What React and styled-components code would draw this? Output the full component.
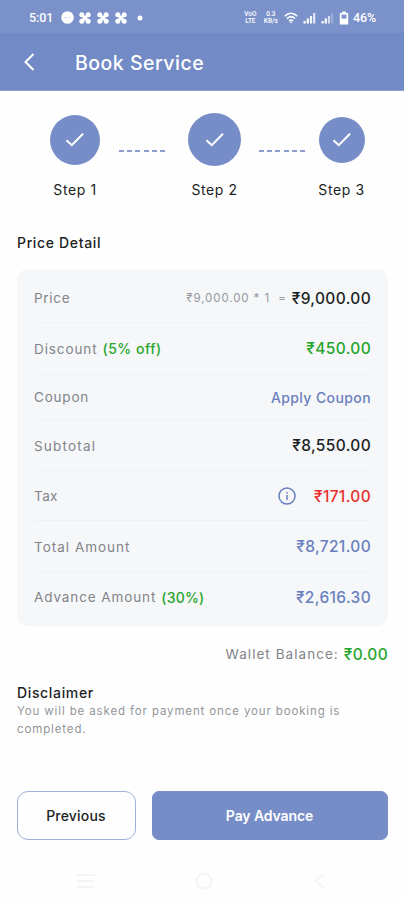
import React from 'react'
import styled, { createGlobalStyle } from 'styled-components'

const GlobalStyle=createGlobalStyle`
*{
  box-sizing:border-box;
}
body{
  margin:0;
  background-color:#fefefe;
}
`
const Container=styled.div`
width:404px;
height:900px;
display:flex;
flex-direction:column;
overflow:hidden;
background-color:#fefefe;
color:#1c1f24;
font-family:Inter,"Noto Sans",sans-serif;
`
const StatusBar=styled.div`
height:33px;
padding:2px 28px 0 29px;
display:flex;
align-items:center;
justify-content:space-between;
background-color:#7a91ca;
color:white;
font-family:Roboto,sans-serif;
font-weight:500;
`
const StatusGroup=styled.div`
display:flex;
align-items:center;
gap:${({$gap})=>$gap}px;
`
const Time=styled.span`
font-size:12.5px;
letter-spacing:-0.1px;
margin-right:4px;
`
const Percent=styled.span`
font-size:12.5px;
letter-spacing:-0.1px;
margin-left:-1px;
`
const Tiny=styled.span`
display:flex;
flex-direction:column;
align-items:center;
width:${({$width})=>$width}px;
font-size:6.5px;
line-height:7px;
`
const TopBar=styled.div`
height:58px;
padding:0 22px;
display:flex;
align-items:center;
gap:39px;
background-color:#728ac5;
border-bottom:1px solid #8d9fce;
color:white;
`
const Title=styled.h1`
margin:2px 0 0;
font-size:19.5px;
font-weight:500;
letter-spacing:0.5px;
`
const Steps=styled.div`
height:143px;
padding-left:49px;
display:flex;
`
const Step=styled.div`
width:${({$width})=>$width}px;
display:flex;
flex-direction:column;
align-items:center;
`
const Badge=styled.div`
height:53px;
margin-top:22px;
display:flex;
align-items:center;
`
const Circle=styled.div`
width:${({$size})=>$size}px;
height:${({$size})=>$size}px;
border-radius:50%;
background-color:#768dc7;
display:flex;
align-items:center;
justify-content:center;
`
const StepLabel=styled.span`
margin-top:15px;
font-size:14px;
line-height:18px;
letter-spacing:0.6px;
white-space:nowrap;
`
const Dashes=styled.div`
width:46px;
margin:59px ${({$after})=>$after}px 0 18px;
display:flex;
justify-content:space-between;
`
const Dash=styled.i`
width:5px;
height:2px;
background-color:#8b9dce;
`
const Body=styled.div`
padding:0 16px 0 17px;
display:flex;
flex-direction:column;
`
const Heading=styled.h2`
margin:0;
font-size:14px;
line-height:18px;
font-weight:500;
letter-spacing:0.65px;
`
const Card=styled.div`
margin-top:17px;
padding:0 17px;
border-radius:11px;
background-color:#f5f7f9;
`
const Row=styled.div`
height:${({$height})=>$height}px;
padding-top:${({$top})=>$top||0}px;
padding-bottom:${({$bottom})=>$bottom||0}px;
display:flex;
align-items:center;
justify-content:space-between;
border-bottom:1px solid ${({$last})=>$last?'transparent':'#eff1f4'};
`
const Label=styled.span`
font-size:13.5px;
letter-spacing:${({$spacing})=>$spacing||0.9}px;
color:#828489;
`
const Value=styled.span`
font-size:15.5px;
font-weight:500;
letter-spacing:0.35px;
color:${({$color})=>$color||'#1c1f24'};
`
const Percentage=styled.span`
font-size:14px;
font-weight:500;
letter-spacing:${({$spacing})=>$spacing}px;
color:#27a52b;
`
const CouponLink=styled.a`
font-size:14px;
font-weight:500;
letter-spacing:0.4px;
color:#6a7fbf;
cursor:pointer;
`
const Group=styled.div`
display:flex;
align-items:center;
gap:${({$gap})=>$gap}px;
`
const Formula=styled.span`
font-size:11.5px;
letter-spacing:0.9px;
color:#96989c;
white-space:pre;
`
const Wallet=styled.div`
height:20px;
margin-top:18px;
display:flex;
align-items:center;
justify-content:flex-end;
gap:5px;
`
const Disclaimer=styled.div`
margin-top:20px;
`
const Note=styled.p`
margin:1px 0 0;
width:345px;
font-size:11.5px;
line-height:17.5px;
letter-spacing:0.87px;
color:#939599;
`
const Actions=styled.div`
margin-top:53px;
display:flex;
gap:16px;
`
const Button=styled.button`
height:49px;
flex:${({$primary})=>$primary?'1':'0 0 119px'};
padding:0 1px 0 0;
border:1px solid ${({$primary})=>$primary?'#768dc7':'#a3afd8'};
border-radius:${({$primary})=>$primary?7:11}px;
background-color:${({$primary})=>$primary?'#768dc7':'#fefefe'};
color:${({$primary})=>$primary?'white':'#1c1f24'};
font-family:inherit;
font-size:14px;
font-weight:${({$primary})=>$primary?600:500};
letter-spacing:${({$primary})=>$primary?-0.1:0.2}px;
`
const NavBar=styled.div`
height:39px;
margin-top:21px;
padding:0 75px;
display:flex;
align-items:center;
justify-content:space-between;
color:#f4f4f5;
`

const GREEN='#27a52b'
const BLUE='#6a7fbf'
const RED='#e8302a'

const Clover=()=>(
  <svg width="14" height="14" viewBox="0 0 14 14" fill="currentColor">
    <circle cx="3.8" cy="3.8" r="2.5"/>
    <circle cx="10.2" cy="3.8" r="2.5"/>
    <circle cx="3.8" cy="10.2" r="2.5"/>
    <circle cx="10.2" cy="10.2" r="2.5"/>
    <path d="M4 4l6 6M10 4l-6 6" stroke="currentColor" strokeWidth="2.8"/>
  </svg>
)

const Signal=({fade})=>(
  <svg width="13" height="12" viewBox="0 0 13 12" fill="currentColor">
    <rect x="0.5" y="9" width="2.2" height="2.5"/>
    <rect x="3.7" y="6.5" width="2.2" height="5"/>
    <rect x="6.9" y="4" width="2.2" height="7.5" opacity={fade?0.7:0.9}/>
    <rect x="10.1" y="1" width="2.2" height="10.5" opacity={fade?0.25:0.8}/>
  </svg>
)

const Check=()=>(
  <svg width="20" height="16" viewBox="0 0 20 16" fill="none" stroke="white" strokeWidth="2">
    <path d="M1.5 8.2l5.3 5L18 1.8"/>
  </svg>
)

const Line=({after})=>(
  <Dashes $after={after}>
    {[1,2,3,4,5,6].map(n=><Dash key={n}/>)}
  </Dashes>
)

export default function App() {
  return (
    <Container>
      <GlobalStyle/>
      <StatusBar>
        <StatusGroup $gap={4}>
          <Time>5:01</Time>
          <svg width="13" height="13" viewBox="0 0 13 13">
            <circle cx="6.5" cy="6.5" r="6.3" fill="white"/>
            <path d="M3 6.5h7" stroke="#c9d2ea" strokeWidth="1.2" strokeDasharray="1.5 1"/>
          </svg>
          <Clover/>
          <Clover/>
          <Clover/>
          <svg width="13" height="6" viewBox="0 0 13 6">
            <circle cx="8" cy="3" r="2.5" fill="white"/>
          </svg>
        </StatusGroup>
        <StatusGroup $gap={5}>
          <Tiny $width={15}><span>VoO</span><span>LTE</span></Tiny>
          <Tiny $width={16}><span>0.3</span><span>KB/s</span></Tiny>
          <svg width="14" height="12" viewBox="0 0 14 12" fill="none" stroke="currentColor" strokeWidth="1.5">
            <path d="M0.8 4.2C4.5 0.4 9.5 0.4 13.2 4.2M3 6.6c2.4-2.4 5.6-2.4 8 0M5 9c1.2-1.1 2.8-1.1 4 0"/>
            <path d="M5.5 9.5L7 11.5l1.5-2z" fill="currentColor" stroke="none"/>
          </svg>
          <Signal/>
          <Signal fade/>
          <svg width="10" height="14" viewBox="0 0 10 14">
            <path d="M3 0.5h4v1.5H9.2v11.5H0.8V2H3z" fill="white"/>
            <rect x="2.6" y="3.6" width="4.8" height="4" fill="#7a91ca"/>
          </svg>
          <Percent>46%</Percent>
        </StatusGroup>
      </StatusBar>
      <TopBar>
        <svg width="14" height="18" viewBox="0 0 14 18" fill="none" stroke="white" strokeWidth="2">
          <path d="M11.5 1L3.5 9l8 8"/>
        </svg>
        <Title>Book Service</Title>
      </TopBar>
      <Steps>
        <Step $width={52}>
          <Badge><Circle $size={50}><Check/></Circle></Badge>
          <StepLabel>Step 1</StepLabel>
        </Step>
        <Line after={23}/>
        <Step $width={53}>
          <Badge><Circle $size={53}><Check/></Circle></Badge>
          <StepLabel>Step 2</StepLabel>
        </Step>
        <Line after={13}/>
        <Step $width={47}>
          <Badge><Circle $size={46}><Check/></Circle></Badge>
          <StepLabel>Step 3</StepLabel>
        </Step>
      </Steps>
      <Body>
        <Heading>Price Detail</Heading>
        <Card>
          <Row $height={54} $top={5}>
            <Label $spacing={0.7}>Price</Label>
            <Group $gap={5}>
              <Formula>₹9,000.00 * 1  =</Formula>
              <Value>₹9,000.00</Value>
            </Group>
          </Row>
          <Row $height={52}>
            <Group $gap={5}>
              <Label>Discount</Label>
              <Percentage $spacing={0.5}>(5% off)</Percentage>
            </Group>
            <Value $color={GREEN}>₹450.00</Value>
          </Row>
          <Row $height={45}>
            <Label $spacing={0.8}>Coupon</Label>
            <CouponLink>Apply Coupon</CouponLink>
          </Row>
          <Row $height={51} $top={1}>
            <Label $spacing={1.2}>Subtotal</Label>
            <Value>₹8,550.00</Value>
          </Row>
          <Row $height={50} $top={1}>
            <Label $spacing={0.4}>Tax</Label>
            <Group $gap={18}>
              <svg width="18" height="18" viewBox="0 0 18 18" fill="none" stroke={BLUE} strokeWidth="1.5">
                <circle cx="9" cy="9" r="8"/>
                <path d="M9 8v5M9 5v1.6"/>
              </svg>
              <Value $color={RED}>₹171.00</Value>
            </Group>
          </Row>
          <Row $height={51} $top={1}>
            <Label $spacing={1}>Total Amount</Label>
            <Value $color={BLUE}>₹8,721.00</Value>
          </Row>
          <Row $height={54} $bottom={3} $last>
            <Group $gap={5}>
              <Label>Advance Amount</Label>
              <Percentage $spacing={0.2}>(30%)</Percentage>
            </Group>
            <Value $color={BLUE}>₹2,616.30</Value>
          </Row>
        </Card>
        <Wallet>
          <Label $spacing={1.05}>Wallet Balance:</Label>
          <Value $color={GREEN}>₹0.00</Value>
        </Wallet>
        <Disclaimer>
          <Heading>Disclaimer</Heading>
          <Note>You will be asked for payment once your booking is completed.</Note>
        </Disclaimer>
        <Actions>
          <Button>Previous</Button>
          <Button $primary>Pay Advance</Button>
        </Actions>
      </Body>
      <NavBar>
        <svg width="22" height="18" viewBox="0 0 22 18" stroke="currentColor" strokeWidth="2">
          <path d="M2 3h18M2 9h18M2 15h18"/>
        </svg>
        <svg width="18" height="18" viewBox="0 0 18 18" fill="none" stroke="currentColor" strokeWidth="2">
          <circle cx="9" cy="9" r="7.5"/>
        </svg>
        <svg width="18" height="18" viewBox="0 0 18 18" fill="none" stroke="currentColor" strokeWidth="2">
          <path d="M13 2L5 9l8 7"/>
        </svg>
      </NavBar>
    </Container>
  )
}
